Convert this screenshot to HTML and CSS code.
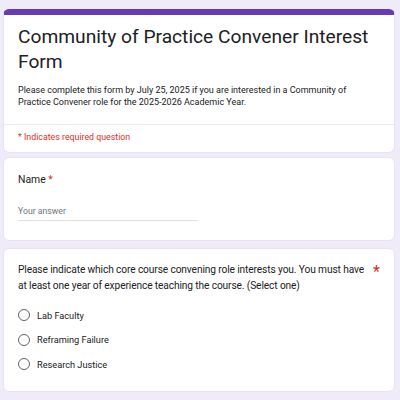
FILE: index.html
```html
<!DOCTYPE html>
<html>
<head>
<meta charset="utf-8">
<link rel="stylesheet" href="styles.css">
</head>
<body>
<div class="page">
  <div class="card header-card">
    <div class="header-main">
      <h1 class="title">Community of Practice Convener Interest Form</h1>
      <p class="desc">Please complete this form by July 25, 2025 if you are interested in a Community of Practice Convener role for the 2025-2026 Academic Year.</p>
    </div>
    <div class="header-foot">* Indicates required question</div>
  </div>
  <div class="card q-card name-card">
    <div class="q-title">Name <span class="req">*</span></div>
    <div class="answer">Your answer</div>
  </div>
  <div class="card q-card choice-card">
    <div class="q-row">
      <div class="q-text">Please indicate which core course convening role interests you. You must have at least one year of experience teaching the course. (Select one)</div>
      <span class="req">*</span>
    </div>
    <div class="options">
      <div class="option"><span class="radio"></span><span class="opt-label">Lab Faculty</span></div>
      <div class="option"><span class="radio"></span><span class="opt-label">Reframing Failure</span></div>
      <div class="option"><span class="radio"></span><span class="opt-label">Research Justice</span></div>
    </div>
  </div>
</div>
</body>
</html>
```
FILE: styles.css
```css
html, body {
  margin: 0;
  padding: 0;
  background: #f0ebf8;
  font-family: Roboto, "Liberation Sans", sans-serif;
  color: #202124;
}
.page {
  padding: 9px 5px 0 3px;
  display: flex;
  flex-direction: column;
}
.card {
  background: #fff;
  border-radius: 6px;
  border: 1px solid #e8e3f0;
}
.header-card {
  border-top: 6px solid #673ab7;
  margin-bottom: 4px;
}
.header-main {
  padding: 9px 14px 16px 14px;
  border-bottom: 1px solid #ececec;
}
.title {
  font-weight: 400;
  font-size: 19.2px;
  line-height: 25px;
  margin: 0 0 10px 0;
}
.desc {
  font-size: 9px;
  line-height: 12px;
  margin: 0;
  padding-right: 24px;
  color: #202124;
}
.header-foot {
  padding: 6px 14px 9px 14px;
  font-size: 8.8px;
  line-height: 12px;
  color: #d93025;
}
.q-card {
  padding: 14px 14px 14px 14px;
}
.name-card {
  margin-bottom: 7px;
  padding-top: 15px;
  padding-bottom: 19px;
}
.q-title {
  font-size: 10.4px;
  line-height: 14px;
}
.req {
  color: #d93025;
}
.answer {
  margin-top: 18px;
  width: 180px;
  font-size: 8.7px;
  line-height: 12px;
  color: #70757a;
  border-bottom: 1px solid #e0e0e0;
  padding-bottom: 3px;
}
.choice-card {
  padding-top: 13px;
  padding-bottom: 19px;
}
.q-row {
  display: flex;
  gap: 3px;
}
.q-text {
  font-size: 10.2px;
  letter-spacing: -0.12px;
  line-height: 16px;
  flex: 1;
}
.options {
  margin-top: 13px;
  display: flex;
  flex-direction: column;
  gap: 8.5px;
}
.option {
  display: flex;
  align-items: center;
  gap: 7px;
  height: 16px;
}
.radio {
  width: 10px;
  height: 10px;
  border: 1.7px solid #5f6368;
  border-radius: 50%;
}
.opt-label {
  font-size: 9.2px;
  color: #202124;
}
```
